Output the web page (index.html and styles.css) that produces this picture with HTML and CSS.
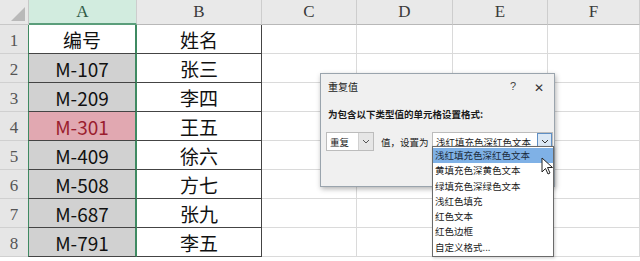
FILE: index.html
```html
<!DOCTYPE html>
<html lang="zh">
<head>
    <meta charset="UTF-8">
    <title>重复值</title>
    <link rel="stylesheet" href="styles.css">
</head>
<body>
    <div class="sheet">
        <div class="grid">
            <div class="corner"><span class="tri"></span></div>
            <div class="colhead sel">A</div>
            <div class="colhead">B</div>
            <div class="colhead">C</div>
            <div class="colhead">D</div>
            <div class="colhead">E</div>
            <div class="colhead">F</div>

            <div class="rowhead">1</div>
            <div class="cell a first">编号</div>
            <div class="cell b">姓名</div>
            <div class="cell"></div><div class="cell"></div><div class="cell"></div><div class="cell"></div>

            <div class="rowhead">2</div>
            <div class="cell a dup">M-107</div>
            <div class="cell b">张三</div>
            <div class="cell"></div><div class="cell"></div><div class="cell"></div><div class="cell"></div>

            <div class="rowhead">3</div>
            <div class="cell a dup">M-209</div>
            <div class="cell b">李四</div>
            <div class="cell"></div><div class="cell"></div><div class="cell"></div><div class="cell"></div>

            <div class="rowhead">4</div>
            <div class="cell a hit">M-301</div>
            <div class="cell b">王五</div>
            <div class="cell"></div><div class="cell"></div><div class="cell"></div><div class="cell"></div>

            <div class="rowhead">5</div>
            <div class="cell a dup">M-409</div>
            <div class="cell b">徐六</div>
            <div class="cell"></div><div class="cell"></div><div class="cell"></div><div class="cell"></div>

            <div class="rowhead">6</div>
            <div class="cell a dup">M-508</div>
            <div class="cell b">方七</div>
            <div class="cell"></div><div class="cell"></div><div class="cell"></div><div class="cell"></div>

            <div class="rowhead">7</div>
            <div class="cell a dup">M-687</div>
            <div class="cell b">张九</div>
            <div class="cell"></div><div class="cell"></div><div class="cell"></div><div class="cell"></div>

            <div class="rowhead">8</div>
            <div class="cell a dup">M-791</div>
            <div class="cell b">李五</div>
            <div class="cell"></div><div class="cell"></div><div class="cell"></div><div class="cell"></div>
        </div>

        <!-- 重复值 dialog -->
        <div class="dialog">
            <div class="title-bar">
                <span class="title">重复值</span>
                <span class="help">?</span>
                <span class="close">✕</span>
            </div>
            <p class="label">为包含以下类型值的单元格设置格式:</p>
            <div class="options">
                <div class="combo small">
                    <span class="combo-text">重复</span>
                    <span class="arrow"><svg width="8" height="5" viewBox="0 0 8 5"><path d="M1 1l3 3 3-3" fill="none" stroke="#555" stroke-width="1"/></svg></span>
                </div>
                <span class="mid">值，设置为</span>
                <div class="combo wide">
                    <span class="combo-text">浅红填充色深红色文本</span>
                    <span class="arrow open"><svg width="8" height="5" viewBox="0 0 8 5"><path d="M1 1l3 3 3-3" fill="none" stroke="#333" stroke-width="1"/></svg></span>
                </div>
            </div>
        </div>

        <ul class="dropdown">
            <li class="active">浅红填充色深红色文本</li>
            <li>黄填充色深黄色文本</li>
            <li>绿填充色深绿色文本</li>
            <li>浅红色填充</li>
            <li>红色文本</li>
            <li>红色边框</li>
            <li>自定义格式...</li>
        </ul>

        <svg class="cursor" width="12" height="18" viewBox="0 0 12 18">
            <path d="M1 1v14l3.5-3.5 2.5 5.5 2-1-2.5-5.5h5z" fill="#fff" stroke="#222" stroke-width="1"/>
        </svg>
    </div>
</body>
</html>
```

FILE: styles.css
```css
body {
    margin: 0;
    background: #fff;
    font-family: "Noto Sans CJK SC", "Noto Sans", sans-serif;
}

.sheet {
    position: relative;
    width: 640px;
    height: 261px;
    overflow: hidden;
}

.grid {
    display: grid;
    grid-template-columns: 29px 108px 125px 95px 96px 95px 92px;
    grid-template-rows: 25px repeat(8, 29px);
}

.corner {
    background: #e8e8e8;
    border-right: 1px solid #c8c8c8;
    border-bottom: 1px solid #c8c8c8;
    position: relative;
}

.tri {
    position: absolute;
    right: 3px;
    bottom: 3px;
    width: 0;
    height: 0;
    border-left: 14px solid transparent;
    border-bottom: 14px solid #b9b9b9;
}

.colhead {
    background: #e9e9e9;
    border-right: 1px solid #cdcdcd;
    border-bottom: 1px solid #b8b8b8;
    font-family: "Liberation Serif", serif;
    font-size: 17px;
    color: #3a3a3a;
    display: flex;
    align-items: center;
    justify-content: center;
}

.colhead.sel {
    background: #d2ecdf;
    border-bottom: 2px solid #5b9e7b;
    color: #2f5a45;
}

.rowhead {
    background: #e6e6e6;
    border-right: 1px solid #b8b8b8;
    border-bottom: 1px solid #d0d0d0;
    font-family: "Liberation Serif", serif;
    font-size: 17px;
    color: #555;
    display: flex;
    align-items: flex-end;
    justify-content: center;
    padding-bottom: 2px;
    box-sizing: border-box;
}

.cell {
    border-right: 1px solid #dadada;
    border-bottom: 1px solid #dadada;
    font-size: 19px;
    color: #111;
    display: flex;
    align-items: center;
    justify-content: center;
}

.cell.a {
    border-left: 1px solid #3f8a62;
    border-right: 2px solid #3f8a62;
    border-bottom: 1px solid #444;
    margin-left: -1px;
}

.cell.a.first {
    background: #fff;
}

.cell.a.dup {
    background: #d1d1d1;
}

.cell.a.hit {
    background: #e1a8b1;
    color: #9b1d2e;
}

.cell.b {
    border-right: 1px solid #444;
    border-bottom: 1px solid #444;
}

/* dialog */
.dialog {
    position: absolute;
    left: 320px;
    top: 73px;
    width: 235px;
    height: 114px;
    background: #f0f0f0;
    border: 1px solid #9aa4ad;
    box-shadow: 1px 2px 5px rgba(0, 0, 0, 0.3);
    box-sizing: border-box;
    font-size: 10px;
    color: #1a1a1a;
}

.title-bar {
    display: flex;
    align-items: center;
    height: 20px;
    padding: 0 0 0 7px;
    margin-top: 2px;
}

.title {
    flex: 1;
}

.help {
    width: 24px;
    font-family: "Liberation Sans", sans-serif;
    font-size: 11px;
    color: #444;
}

.close {
    width: 20px;
    font-size: 12px;
    color: #333;
}

.label {
    margin: 11px 0 0 7px;
    font-weight: bold;
    font-size: 9.5px;
}

.options {
    display: flex;
    align-items: center;
    margin: 11px 1px 0 5px;
}

.combo {
    display: flex;
    align-items: center;
    height: 19px;
    background: #fff;
    border: 1px solid #bcbcbc;
    box-sizing: border-box;
}

.combo.small {
    width: 48px;
}

.combo.wide {
    width: 121px;
    margin-left: auto;
}

.combo-text {
    flex: 1;
    padding-left: 3px;
    font-size: 9.5px;
    white-space: nowrap;
    overflow: hidden;
}

.arrow {
    width: 14px;
    height: 17px;
    background: #e6e6e6;
    border-left: 1px solid #d0d0d0;
    display: flex;
    align-items: center;
    justify-content: center;
}

.arrow.open {
    background: #dbe8f5;
    border: 1px solid #5f8fc4;
    height: 15px;
    width: 13px;
}

.mid {
    margin-left: 7px;
    font-size: 9.5px;
    color: #222;
    white-space: nowrap;
}

/* dropdown list */
.dropdown {
    position: absolute;
    left: 432px;
    top: 146px;
    width: 122px;
    margin: 0;
    padding: 1px 0;
    list-style: none;
    background: #fff;
    border: 1px solid #6a6a6a;
    box-sizing: border-box;
    box-shadow: 1px 1px 3px rgba(0, 0, 0, 0.2);
}

.dropdown li {
    height: 15.3px;
    line-height: 15.3px;
    padding-left: 2px;
    font-size: 9.5px;
    color: #1a1a1a;
    white-space: nowrap;
}

.dropdown li.active {
    background: #7fb1e6;
    color: #1b2a3a;
}

.cursor {
    position: absolute;
    left: 541px;
    top: 157px;
}
```
